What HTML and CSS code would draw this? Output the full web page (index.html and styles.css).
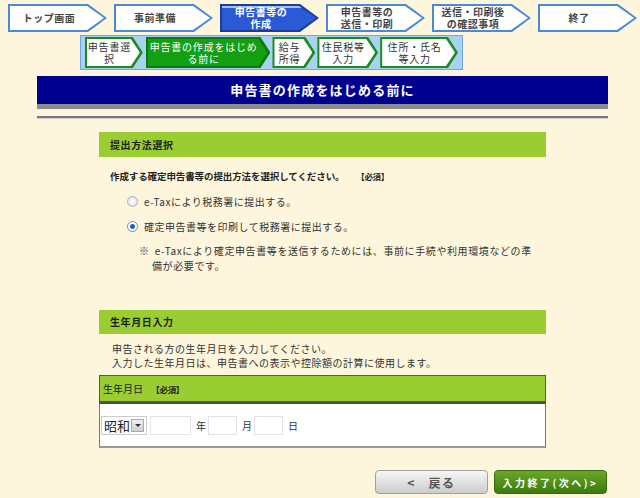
FILE: index.html
```html
<!DOCTYPE html>
<html lang="ja">

<head>
    <meta charset="UTF-8">
    <meta name="viewport" content="width=device-width, initial-scale=1.0">
    <title>申告書の作成をはじめる前に</title>
    <link rel="stylesheet" href="styles.css">
</head>

<body>

    <div class="steps">
        <div class="step"><div class="step-in">トップ画面</div></div>
        <div class="step"><div class="step-in">事前準備</div></div>
        <div class="step active"><div class="step-in">申告書等の<br>作成</div></div>
        <div class="step"><div class="step-in">申告書等の<br>送信・印刷</div></div>
        <div class="step"><div class="step-in">送信・印刷後<br>の確認事項</div></div>
        <div class="step"><div class="step-in">終了</div></div>
    </div>

    <div class="substeps">
        <div class="sub sub1"><div class="sub-in">申告書選<br>択</div></div>
        <div class="sub sub2 active"><div class="sub-in">申告書の作成をはじめ<br>る前に</div></div>
        <div class="sub sub3"><div class="sub-in">給与<br>所得</div></div>
        <div class="sub sub4"><div class="sub-in">住民税等<br>入力</div></div>
        <div class="sub sub5"><div class="sub-in">住所・氏名<br>等入力</div></div>
    </div>

    <h1 class="title">申告書の作成をはじめる前に</h1>
    <hr class="rule">

    <div class="content">
        <div class="bar">提出方法選択</div>
        <p class="question">作成する確定申告書等の提出方法を選択してください。<span class="req">【必須】</span></p>

        <div class="radio-row"><span class="radio"></span>e-Taxにより税務署に提出する。</div>
        <div class="radio-row"><span class="radio checked"></span>確定申告書等を印刷して税務署に提出する。</div>
        <div class="note">
            <span class="mark">※</span>
            <span class="note-text">&nbsp;e-Taxにより確定申告書等を送信するためには、事前に手続や利用環境などの準<br>備が必要です。</span>
        </div>

        <div class="bar bar2">生年月日入力</div>
        <p class="intro">申告される方の生年月日を入力してください。<br>入力した生年月日は、申告書への表示や控除額の計算に使用します。</p>

        <div class="field-head">生年月日 <span class="req">【必須】</span></div>
        <div class="field-body">
            <span class="era">昭和<span class="era-btn"></span></span>
            <span class="box year"></span><span class="unit">年</span>
            <span class="box month"></span><span class="unit">月</span>
            <span class="box day"></span><span class="unit">日</span>
        </div>
    </div>

    <div class="buttons">
        <button class="btn back">&lt;&nbsp;&nbsp;&nbsp;戻る</button>
        <button class="btn next">入力終了(次へ)&gt;</button>
    </div>

</body>

</html>
```

FILE: styles.css
```css
body {
    margin: 0;
    background-color: #fdf6dd;
    font-family: "Noto Sans CJK JP", sans-serif;
    color: #333333;
}

/* top progress steps */
.steps {
    display: flex;
    gap: 7px;
    padding: 4px 0 0 8px;
}

.step {
    width: 99px;
    height: 28px;
    padding: 2px 3px 2px 2px;
    box-sizing: border-box;
    background-color: #4d8ad6;
    clip-path: polygon(0 0, 80px 0, 99px 14px, 80px 28px, 0 28px);
}

.step-in {
    height: 100%;
    padding-right: 16px;
    display: flex;
    align-items: center;
    justify-content: center;
    background-color: #ffffff;
    clip-path: polygon(0 0, 77px 0, 94px 12px, 77px 24px, 0 24px);
    font-size: 10px;
    font-weight: bold;
    line-height: 12px;
    letter-spacing: 0.5px;
    text-align: center;
    color: #444444;
}

.step.active {
    background-color: #1c3c9c;
}

.step.active .step-in {
    background: linear-gradient(#9cc4f4 0 2px, #2a5ad6 2px);
    color: #ffffff;
}

/* sub steps */
.substeps {
    display: flex;
    gap: 2px;
    width: 383px;
    height: 35px;
    margin: 3px 0 0 80px;
    padding: 1px 4px;
    box-sizing: border-box;
    background-color: #a8d2f4;
    border: 1px solid #6fa8dc;
}

.sub {
    height: 31px;
    padding: 2px 3px 2px 2px;
    box-sizing: border-box;
    background-color: #1f8a1f;
    clip-path: polygon(0 0, calc(100% - 10px) 0, 100% 50%, calc(100% - 10px) 100%, 0 100%);
}

.sub-in {
    height: 100%;
    padding-right: 8px;
    display: flex;
    align-items: center;
    justify-content: center;
    background-color: #ffffff;
    clip-path: polygon(0 0, calc(100% - 9px) 0, 100% 50%, calc(100% - 9px) 100%, 0 100%);
    font-size: 10px;
    line-height: 12px;
    letter-spacing: 0.8px;
    text-align: center;
    color: #333333;
}

.sub1 { width: 58px; margin-right: 1px; }
.sub2 { width: 125px; }
.sub3 { width: 43px; }
.sub4 { width: 61px; }
.sub5 { width: 78px; }

.sub.active {
    background-color: #0d7a0d;
}

.sub.active .sub-in {
    background-color: #12a012;
    color: #ffffff;
}

/* page title */
.title {
    width: 571px;
    height: 28px;
    margin: 6px 0 0 37px;
    background-color: #00008f;
    border-bottom: 5px solid #8c8c8c;
    color: #ffffff;
    font-size: 13px;
    line-height: 28px;
    letter-spacing: 1.2px;
    text-align: center;
}

.rule {
    width: 571px;
    margin: 7px 0 0 37px;
    border: none;
    border-top: 2px solid #777777;
    border-bottom: 1px solid #cfcfcf;
}

/* content */
.content {
    width: 447px;
    margin-left: 99px;
    font-size: 10px;
}

.bar {
    height: 25px;
    margin-top: 13px;
    padding-left: 11px;
    background-color: #9acd32;
    font-weight: bold;
    line-height: 25px;
    letter-spacing: 0.6px;
    color: #222222;
}

.bar2 {
    margin-top: 37px;
    height: 24px;
    line-height: 24px;
}

.question {
    margin: 12px 0 0 11px;
    font-size: 9.5px;
    font-weight: bold;
    line-height: 14px;
    letter-spacing: -0.1px;
    color: #222222;
}

.req {
    margin-left: 16px;
    font-size: 8.5px;
    font-weight: bold;
    letter-spacing: -0.3px;
    color: #222222;
}

.radio-row {
    display: flex;
    align-items: center;
    height: 14px;
    margin-top: 11px;
    padding-left: 28px;
    letter-spacing: 0.5px;
}

.radio-row:first-of-type {
    margin-top: 12px;
}

.radio {
    width: 9px;
    height: 9px;
    margin-right: 6px;
    border: 1px solid #b0b0b0;
    border-radius: 50%;
    background: radial-gradient(#ffffff, #dcdcdc);
}

.radio.checked {
    border-color: #6b8fc8;
    background: radial-gradient(#2a5cc8 0 2px, #ffffff 3px);
}

.note {
    display: flex;
    margin-top: 10px;
    padding-left: 40px;
    line-height: 15px;
    letter-spacing: 0.6px;
}

.mark {
    width: 13px;
}

.intro {
    margin: 8px 0 0 13px;
    line-height: 14px;
    letter-spacing: 0.5px;
}

.field-head {
    height: 25px;
    margin-top: 5px;
    padding-left: 3px;
    background-color: #9acd32;
    border: 1px solid #555555;
    border-bottom-width: 2px;
    line-height: 25px;
    color: #222222;
}

.field-head .req {
    margin-left: 6px;
}

.field-body {
    display: flex;
    align-items: center;
    height: 45px;
    padding-left: 1px;
    box-sizing: border-box;
    background-color: #ffffff;
    border: 1px solid #777777;
    border-top-color: #444444;
    border-bottom: 2px solid #9a9a9a;
}

.era {
    display: flex;
    align-items: center;
    justify-content: space-between;
    width: 46px;
    height: 19px;
    padding: 0 2px;
    box-sizing: border-box;
    border: 1px solid #cccccc;
    font-size: 13px;
    color: #222222;
}

.era-btn {
    width: 11px;
    height: 11px;
    border: 1px solid #aaaaaa;
    background: linear-gradient(#f0f0f0, #cfcfcf);
    position: relative;
}

.era-btn::after {
    content: "";
    position: absolute;
    left: 3px;
    top: 4px;
    border-left: 3px solid transparent;
    border-right: 3px solid transparent;
    border-top: 3px solid #333333;
}

.box {
    height: 17px;
    margin-left: 3px;
    border: 1px solid #e2e2e2;
}

.year { width: 39px; }
.month { width: 27px; margin-left: 0; }
.day { width: 27px; margin-left: 0; }

.unit {
    width: 17px;
    padding-left: 5px;
    box-sizing: border-box;
}

/* bottom buttons */
.buttons {
    display: flex;
    gap: 6px;
    margin: 22px 0 0 375px;
}

.btn {
    width: 113px;
    height: 24px;
    border-radius: 4px;
    font-family: "Noto Sans CJK JP", sans-serif;
    font-weight: bold;
    cursor: pointer;
}

.back {
    border: 1px solid #a0a0a0;
    background: linear-gradient(#f6f6f6, #cccccc);
    color: #555555;
    font-size: 12px;
    letter-spacing: 1.5px;
}

.next {
    border: 1px solid #3a6a10;
    background: linear-gradient(#6aa82a, #3c7a0c);
    color: #ffffff;
    font-size: 10px;
    letter-spacing: 2.5px;
}
```
